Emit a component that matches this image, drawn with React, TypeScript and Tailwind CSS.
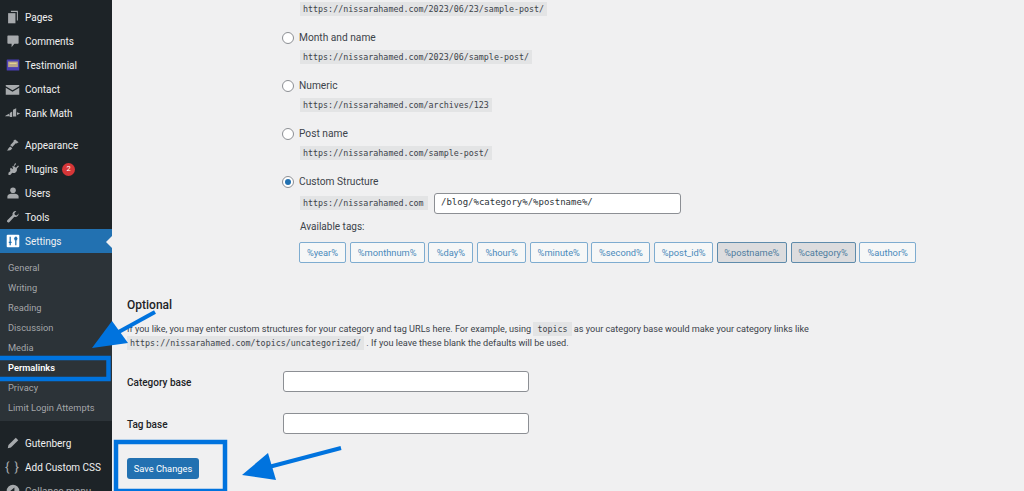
import React from "react";

const sans = "font-['Roboto','Noto_Sans',sans-serif]";
const mono = "font-['DejaVu_Sans_Mono',monospace]";

const MenuIcon = ({ name }: { name: string }) => {
  const c = "w-[14px] h-[14px] fill-[#a7aaad]";
  switch (name) {
    case "pages":
      return (
        <svg viewBox="0 0 20 20" className={c}>
          <path d="M7 1h10v14h-1.500V3H7z" />
          <path d="M3 4.500h10.500V19H3z" />
        </svg>
      );
    case "comments":
      return (
        <svg viewBox="0 0 20 20" className={c}>
          <path d="M3 2h14a1 1 0 0 1 1 1v10a1 1 0 0 1-1 1h-5l-4 5v-5H3a1 1 0 0 1-1-1V3a1 1 0 0 1 1-1z" />
        </svg>
      );
    case "testimonial":
      return (
        <svg viewBox="0 0 20 20" className="w-[14px] h-[14px]">
          <rect x="1" y="2" width="18" height="16" rx="1" fill="#4b3fb3" />
          <rect x="3" y="5" width="14" height="8" fill="#b9a58a" />
          <rect x="5" y="7" width="10" height="1.500" fill="#e6d68f" />
        </svg>
      );
    case "contact":
      return (
        <svg viewBox="0 0 20 20" className="w-[15px] h-[15px] fill-[#a7aaad]">
          <path d="M1 4h18v1.500l-9 5.500-9-5.500z" />
          <path d="M1 7.500l9 5.500 9-5.500V17H1z" />
        </svg>
      );
    case "rank":
      return (
        <svg viewBox="0 0 20 20" className="w-[16px] h-[16px] fill-[#a7aaad]">
          <path d="M1 13l4-2 1 3H0zM6 10l3-2v7H6zM10 6l4-2v10.500h-4zM15 9l4 1.500-4 2z" />
        </svg>
      );
    case "appearance":
      return (
        <svg viewBox="0 0 20 20" className={c}>
          <path d="M13 2l5 4-3 2-1-.5-5 5.500-3-2.500 5-5.500-.5-1z" />
          <path d="M6 12l3 2.500c-1 2.500-4 3.500-8 3.500 2-1 2-4 5-6z" />
        </svg>
      );
    case "plugins":
      return (
        <svg viewBox="0 0 20 20" className={c}>
          <path d="M13 1.500l1.500 1.200-3 3.300 2.700 2.200 3-3.200L18.500 6l-3 3.500c.5 2 0 3.500-1.500 5-1.500 1.300-3.500 1.500-5 .8L6 18.500H3.500v-3l3-2.500c-1-1.500-.8-3.300.3-4.800l3.200 2.300-1-5 1.500.8z" />
        </svg>
      );
    case "users":
      return (
        <svg viewBox="0 0 20 20" className={c}>
          <circle cx="10" cy="6" r="4" />
          <path d="M2 18v-3c0-2.500 3-4 5-4h6c2 0 5 1.500 5 4v3z" />
        </svg>
      );
    case "tools":
      return (
        <svg viewBox="0 0 20 20" className={c}>
          <path d="M18 5.500c0 2.500-2 4.500-4.500 4.500-.6 0-1.100-.1-1.600-.3L5 17c-.9.900-2.200 1-3 .2s-.7-2 .2-3l7.200-7A4.500 4.500 0 0 1 14.800 1.500L12 4.500l.7 2.800 2.800.7 2.400-3z" />
        </svg>
      );
    case "settings":
      return (
        <svg viewBox="0 0 20 20" className="w-[14px] h-[14px]">
          <rect x="1" y="1" width="18" height="18" rx="1.500" fill="#fff" />
          <path d="M6 4v12M4 12h4M14 4v12M12 8h4M14 4l-2 3M14 4l2 3" stroke="#2271b1" strokeWidth="1.800" fill="none" />
        </svg>
      );
    case "gutenberg":
      return (
        <svg viewBox="0 0 20 20" className={c}>
          <path d="M14 2.500l3.500 3.500L7 16.500 2.500 17.500 3.500 13z" />
        </svg>
      );
    default:
      return (
        <svg viewBox="0 0 20 20" className={c}>
          <path d="M10 1a9 9 0 1 0 0 18 9 9 0 0 0 0-18zm2 4v10l-6-5z" />
        </svg>
      );
  }
};

const MenuItem = ({ icon, label, badge }: { icon: string; label: string; badge?: string }) => (
  <div className="h-[24px] flex items-center text-[#f0f0f1] text-[10px]">
    <div className="w-[25px] flex justify-center shrink-0">
      <MenuIcon name={icon} />
    </div>
    <span>{label}</span>
    {badge && (
      <span className="ml-[4px] w-[13px] h-[13px] rounded-full bg-[#d63638] text-white text-[7.5px] flex items-center justify-center">
        {badge}
      </span>
    )}
  </div>
);

const SubItem = ({ label, active }: { label: string; active?: boolean }) => (
  <div className={active ? "h-[20px] pl-[8px] flex items-center text-[9.300px] text-white font-semibold" : "h-[20px] pl-[8px] flex items-center text-[9.300px] text-[#c3c4c7]/80"}>
    {label}
  </div>
);

const Sidebar = () => (
  <aside className="w-[112px] h-[491px] shrink-0 bg-[#1d2327] pt-[5px] overflow-hidden">
    <MenuItem icon="pages" label="Pages" />
    <MenuItem icon="comments" label="Comments" />
    <MenuItem icon="testimonial" label="Testimonial" />
    <MenuItem icon="contact" label="Contact" />
    <MenuItem icon="rank" label="Rank Math" />
    <div className="h-[8px]" />
    <MenuItem icon="appearance" label="Appearance" />
    <MenuItem icon="plugins" label="Plugins" badge="2" />
    <MenuItem icon="users" label="Users" />
    <MenuItem icon="tools" label="Tools" />
    <div className="relative bg-[#2271b1]">
      <MenuItem icon="settings" label="Settings" />
      <div className="absolute right-0 top-[7px] border-y-[6px] border-y-transparent border-r-[6px] border-r-[#f0f0f1]" />
    </div>
    <div className="bg-[#2c3338] pt-[5px] pb-[3px] mb-[10px]">
      <SubItem label="General" />
      <SubItem label="Writing" />
      <SubItem label="Reading" />
      <SubItem label="Discussion" />
      <SubItem label="Media" />
      <SubItem label="Permalinks" active />
      <SubItem label="Privacy" />
      <SubItem label="Limit Login Attempts" />
    </div>
    <MenuItem icon="gutenberg" label="Gutenberg" />
    <div className="h-[24px] flex items-center text-[#f0f0f1] text-[10px]">
      <div className="w-[25px] shrink-0 text-center text-[#a7aaad] text-[13px] tracking-[1px]">{"{ }"}</div>
      <span>Add Custom CSS</span>
    </div>
    <div className="h-[24px] flex items-center text-[#a7aaad] text-[10px]">
      <div className="w-[25px] flex justify-center shrink-0">
        <MenuIcon name="collapse" />
      </div>
      <span>Collapse menu</span>
    </div>
  </aside>
);

const Code = ({ children, className = "" }: { children: React.ReactNode; className?: string }) => (
  <code className={`${mono} inline-block align-top bg-[#e3e4e5] text-[#3c434a] text-[8.350px] leading-[14px] px-[3px] ${className}`}>{children}</code>
);

const RadioLabel = ({ label, checked }: { label: string; checked?: boolean }) => (
  <div className="h-[14px] flex items-center gap-[4px] text-[#3c434a] text-[10.200px]">
    <span className="w-[12px] h-[12px] -ml-[1px] mr-[1px] rounded-full border border-[#8c8f94] bg-white flex items-center justify-center">
      {checked && <span className="w-[6px] h-[6px] rounded-full bg-[#2271b1]" />}
    </span>
    {label}
  </div>
);

const Radio = ({ label, url, checked }: { label: string; url: string; checked?: boolean }) => (
  <div className="h-[48px]">
    <RadioLabel label={label} checked={checked} />
    <div className="pl-[17px] mt-[5.300px] flex">
      <Code>{url}</Code>
    </div>
  </div>
);

const tags: [string, number, boolean][] = [
  ["%year%", 47, false],
  ["%monthnum%", 75, false],
  ["%day%", 45, false],
  ["%hour%", 49, false],
  ["%minute%", 58, false],
  ["%second%", 59, false],
  ["%post_id%", 59, false],
  ["%postname%", 70, true],
  ["%category%", 65, true],
  ["%author%", 57, false],
];

const Tag = ({ label, width, active }: { label: string; width: number; active: boolean }) => (
  <div
    style={{ width }}
    className={
      active
        ? "h-[21px] shrink-0 flex items-center justify-center rounded-[2px] border border-[#5f8bab] bg-[#dcdcde] text-[#4f7c9f] text-[9.300px]"
        : "h-[21px] shrink-0 flex items-center justify-center rounded-[2px] border border-[#7eacd0] bg-[#f6f7f7] text-[#4a8abb] text-[9.300px]"
    }
  >
    {label}
  </div>
);

const Field = ({ label, className = "" }: { label: string; className?: string }) => (
  <div className={`grid grid-cols-[156px_1fr] items-center ${className}`}>
    <div className="pt-[2px] text-[#1d2327] text-[10px] font-medium">{label}</div>
    <div className="w-[246px] h-[21px] rounded-[3px] border border-[#8c8f94] bg-white" />
  </div>
);

// setas e caixas azuis desenhadas por cima da captura
const Annotations = () => (
  <svg viewBox="0 0 1024 491" className="absolute inset-0 w-[1024px] h-[491px] pointer-events-none">
    <g fill="none" stroke="#0073de">
      <rect x="-4" y="358" width="112.500" height="21" strokeWidth="4.500" />
      <rect x="116" y="442" width="109" height="49" strokeWidth="4.500" />
      <path d="M155 312L115 334" strokeWidth="4" />
      <path d="M341 448L265 468" strokeWidth="4" />
    </g>
    <path d="M92 348L112 321 128 343z" fill="#0073de" />
    <path d="M242 475L268 453 276 480z" fill="#0073de" />
  </svg>
);

export default function App() {
  return (
    <div className={`relative w-[1024px] h-[491px] overflow-hidden flex bg-[#f0f0f1] ${sans}`}>
      <Sidebar />
      <main className="flex-1 pl-[15px]">
        <div className="pl-[156px]">
          <div className="pl-[17px] pt-[2px] h-[30.700px] flex items-start">
            <Code>https://nissarahamed.com/2023/06/23/sample-post/</Code>
          </div>
          <Radio label="Month and name" url="https://nissarahamed.com/2023/06/sample-post/" />
          <Radio label="Numeric" url="https://nissarahamed.com/archives/123" />
          <Radio label="Post name" url="https://nissarahamed.com/sample-post/" />
          <RadioLabel label="Custom Structure" checked />
          <div className="pl-[17px] mt-[4px] flex items-center h-[21px]">
            <Code className="w-[128px]">https://nissarahamed.com</Code>
            <div className={`${mono} ml-[6px] w-[247px] h-[21px] flex items-center rounded-[3px] border border-[#8c8f94] bg-white pl-[6px] text-[#2c3338] text-[9px]`}>
              /blog/%category%/%postname%/
            </div>
          </div>
          <div className="pl-[17px] mt-[6px] text-[#3c434a] text-[10px] leading-[14px]">Available tags:</div>
          <div className="pl-[16px] mt-[8.600px] flex gap-[3.700px]">
            {tags.map(([label, width, active]) => (
              <Tag key={label} label={label} width={width} active={active} />
            ))}
          </div>
        </div>
        <h2 className="mt-[32.500px] text-[#1d2327] text-[12px] leading-[18px] font-medium">Optional</h2>
        <p className="mt-[8.200px] text-[#3c434a] text-[9.150px] leading-[14px] whitespace-nowrap">
          If you like, you may enter custom structures for your category and tag URLs here. For example, using{" "}
          <Code className="px-[4px]">topics</Code> as your category base would make your category links like
        </p>
        <p className="text-[#3c434a] text-[9.150px] leading-[14px] whitespace-nowrap">
          <Code>https://nissarahamed.com/topics/uncategorized/</Code> . If you leave these blank the defaults will be used.
        </p>
        <Field label="Category base" className="mt-[21px]" />
        <Field label="Tag base" className="mt-[21px]" />
        <button className="mt-[24px] w-[72px] h-[21px] pt-[1px] rounded-[3px] bg-[#2271b1] text-white text-[9.300px]">Save Changes</button>
      </main>
      <Annotations />
    </div>
  );
}
